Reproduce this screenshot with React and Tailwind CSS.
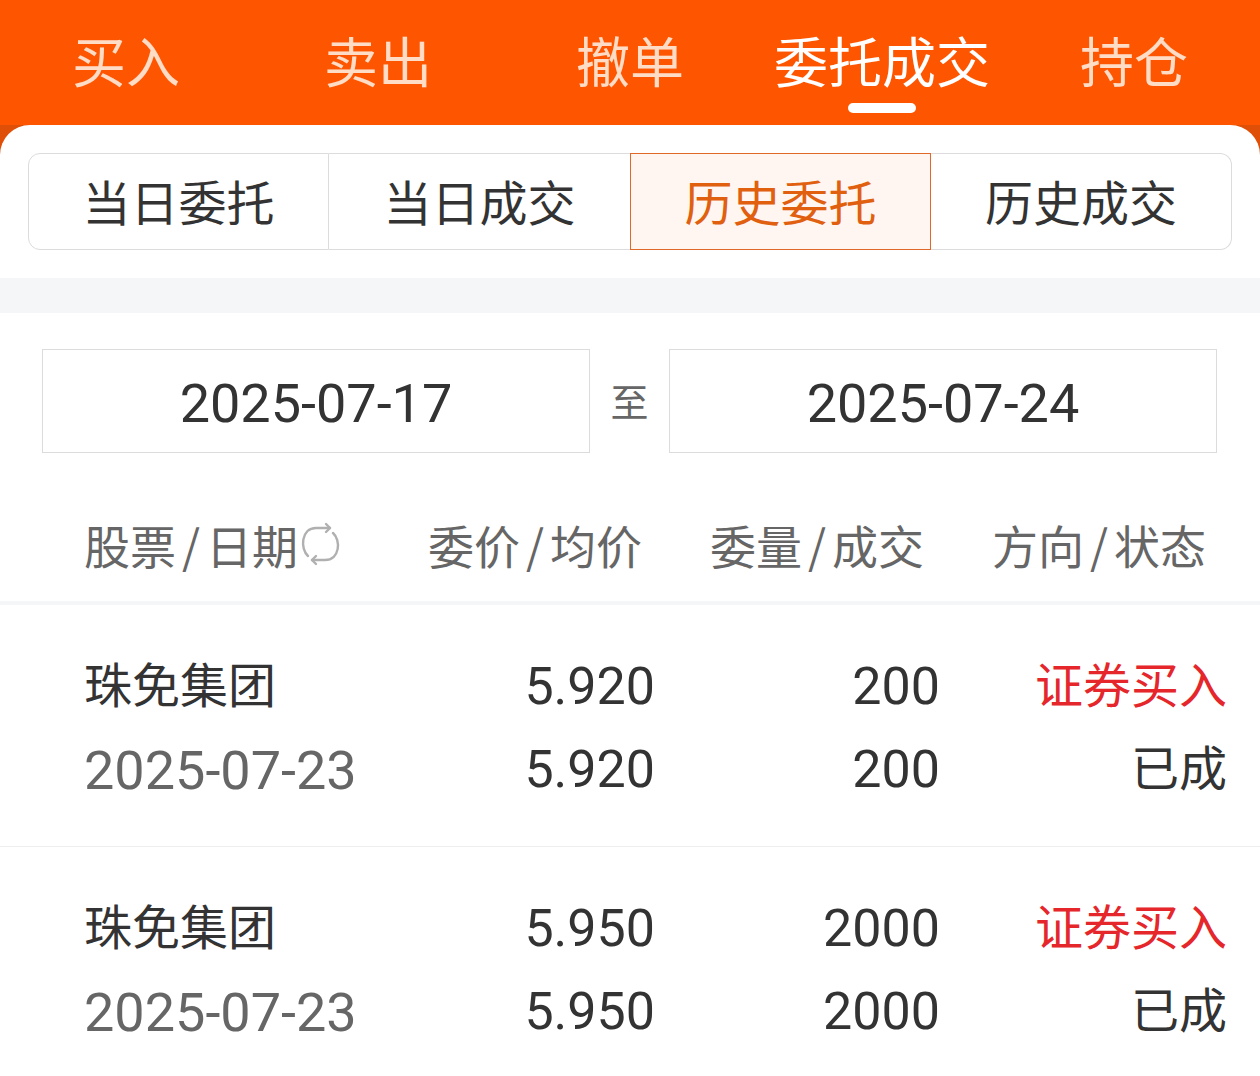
import React from "react";

const topTabs = ["买入", "卖出", "撤单", "委托成交", "持仓"];

const orders = [
  { name: "珠免集团", date: "2025-07-23", price: "5.920", avg: "5.920", qty: "200", deal: "200", dir: "证券买入", status: "已成" },
  { name: "珠免集团", date: "2025-07-23", price: "5.950", avg: "5.950", qty: "2000", deal: "2000", dir: "证券买入", status: "已成" },
];

function SwapIcon() {
  return (
    <svg width="46" height="44" viewBox="0 0 46 44" fill="none" stroke="#b0b0b0" strokeWidth="2.4" strokeLinecap="round" strokeLinejoin="round">
      <path d="M10 34 C2 27 3 6 18 6 H32" />
      <path d="M28 2 L32 6 L28 10" />
      <path d="M35 11 C43 18 42 38 27 38 H14" />
      <path d="M18 34 L14 38 L18 42" />
    </svg>
  );
}

// header label "a/b" with a slightly wider slash, as in the app
function HeadLabel({ a, b }) {
  return (
    <span>
      {a}
      <span className="mx-[6px]">/</span>
      {b}
    </span>
  );
}

export default function App() {
  const font = { fontFamily: 'Roboto, "Noto Sans CJK SC", sans-serif' };
  const cjk = { fontFamily: '"Noto Sans CJK SC", sans-serif' };

  return (
    <div className="min-h-screen flex flex-col bg-[#e04f08]" style={font}>
      {/* TOP TABS */}
      <div className="h-[125px] bg-[#fe5500] grid grid-cols-5">
        {topTabs.map((t) => {
          const active = t === "委托成交";
          return (
            <div key={t} className="flex flex-col items-center pt-[38px]">
              <span className={`text-[54px] leading-[54px] ${active ? "text-white" : "text-[#ffdcc6]"}`}>{t}</span>
              {active && <span className="mt-[11px] h-[10px] w-[68px] rounded-full bg-white" />}
            </div>
          );
        })}
      </div>

      {/* PANEL */}
      <div className="flex-1 bg-white rounded-t-[30px] pt-[28px]">
        <div className="mx-[28px] h-[97px] grid grid-cols-4 text-[48px] text-[#333]">
          <div className="flex items-center justify-center pt-[7px] border border-[#dcdcdc] rounded-l-[12px]">当日委托</div>
          <div className="flex items-center justify-center pt-[7px] border-y border-[#dcdcdc]">当日成交</div>
          <div className="flex items-center justify-center pt-[7px] border border-[#e0692a] bg-[#fff6f1] text-[#e0600f]">历史委托</div>
          <div className="flex items-center justify-center pt-[7px] border-y border-r border-[#dcdcdc] rounded-r-[12px]">历史成交</div>
        </div>

        <div className="mt-[28px] h-[35px] bg-[#f5f6f8]" />

        {/* DATE RANGE */}
        <div className="pt-[36px] pl-[42px] pr-[43px] flex items-center">
          <div className="w-[548px] h-[104px] pt-[4px] border border-[#dcdcdc] flex items-center justify-center text-[54px] text-[#333]">2025-07-17</div>
          <div className="flex-1 text-center pt-[4px] text-[38px] text-[#666]">至</div>
          <div className="w-[548px] h-[104px] pt-[4px] border border-[#dcdcdc] flex items-center justify-center text-[54px] text-[#333]">2025-07-24</div>
        </div>

        {/* TABLE HEADER */}
        <div className="mt-[34px] h-[114px] pl-[84px] flex items-center text-[46px] text-[#666]" style={cjk}>
          <div className="w-[344px] flex items-center">
            <HeadLabel a="股票" b="日期" />
            <SwapIcon />
          </div>
          <div className="w-[282px]"><HeadLabel a="委价" b="均价" /></div>
          <div className="w-[282px]"><HeadLabel a="委量" b="成交" /></div>
          <div><HeadLabel a="方向" b="状态" /></div>
        </div>
        <div className="h-[4px] bg-[#f5f6f8]" />

        {/* ROWS */}
        {orders.map((o, i) => (
          <div key={i} className="pl-[84px] pr-[33px] pt-[52px] pb-[46px] border-b border-[#eeeeee] flex flex-col gap-[23px]">
            <div className="h-[60px] flex items-center">
              <div className="w-[369px] text-[48px] text-[#333]">{o.name}</div>
              <div className="w-[202px] text-right text-[52px] text-[#333]">{o.price}</div>
              <div className="w-[285px] text-right text-[52px] text-[#333]">{o.qty}</div>
              <div className="flex-1 text-right text-[48px] text-[#e5272b]">{o.dir}</div>
            </div>
            <div className="h-[60px] flex items-center">
              <div className="w-[369px] text-[54px] text-[#666]">{o.date}</div>
              <div className="w-[202px] text-right text-[52px] text-[#333]">{o.avg}</div>
              <div className="w-[285px] text-right text-[52px] text-[#333]">{o.deal}</div>
              <div className="flex-1 text-right text-[48px] text-[#333]">{o.status}</div>
            </div>
          </div>
        ))}
      </div>
    </div>
  );
}
